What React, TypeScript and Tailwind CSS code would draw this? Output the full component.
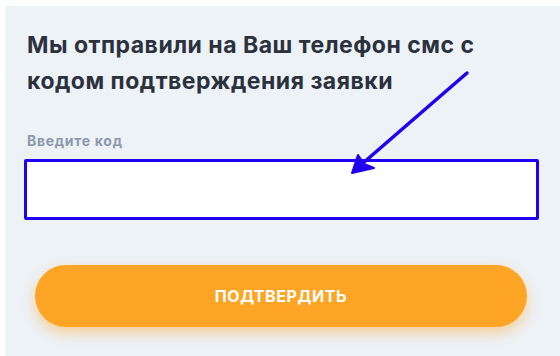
export default function App() {
  return (
    <div className="relative h-[356px] w-[560px] overflow-hidden bg-white pl-[5px] pt-[6px]" style={{ fontFamily: 'Inter, "Noto Sans", sans-serif' }}>
      <div className="h-full bg-[#edf2f7] pl-[22px] pr-[22px] pt-[21px]">
        <h1 className="max-w-[480px] text-[23px] font-bold leading-[36px] tracking-[0.5px] text-[#2b313d]">
          Мы отправили на Ваш телефон смс с кодом подтверждения заявки
        </h1>

        <label className="mt-[33px] block text-[14px] font-bold leading-[18px] tracking-[0.7px] text-[#8c99ab]">
          Введите код
        </label>
        <input
          type="text"
          className="mt-[9px] block h-[61px] w-[515px] -ml-[3px] rounded-[2px] border-[3px] border-[#1f00f0] bg-white outline-none"
        />

        <button className="mt-[45px] ml-[8px] flex h-[62px] w-[492px] items-center justify-center rounded-full bg-[#ffa526] text-[16px] font-bold uppercase tracking-[0.6px] text-white shadow-[0_6px_14px_rgba(255,165,38,0.45)]">
          Подтвердить
        </button>
      </div>

      {/* annotation arrow */}
      <svg className="pointer-events-none absolute left-0 top-0" width="560" height="356" viewBox="0 0 560 356">
        <path d="M467 73 L355 170" stroke="#1f00f0" strokeWidth="3.5" strokeLinecap="round" fill="none" />
        <path d="M352 173 L358 155 L364 164 L374 168 Z" fill="#1f00f0" stroke="#1f00f0" strokeWidth="2" strokeLinejoin="round" />
      </svg>
    </div>
  );
}
